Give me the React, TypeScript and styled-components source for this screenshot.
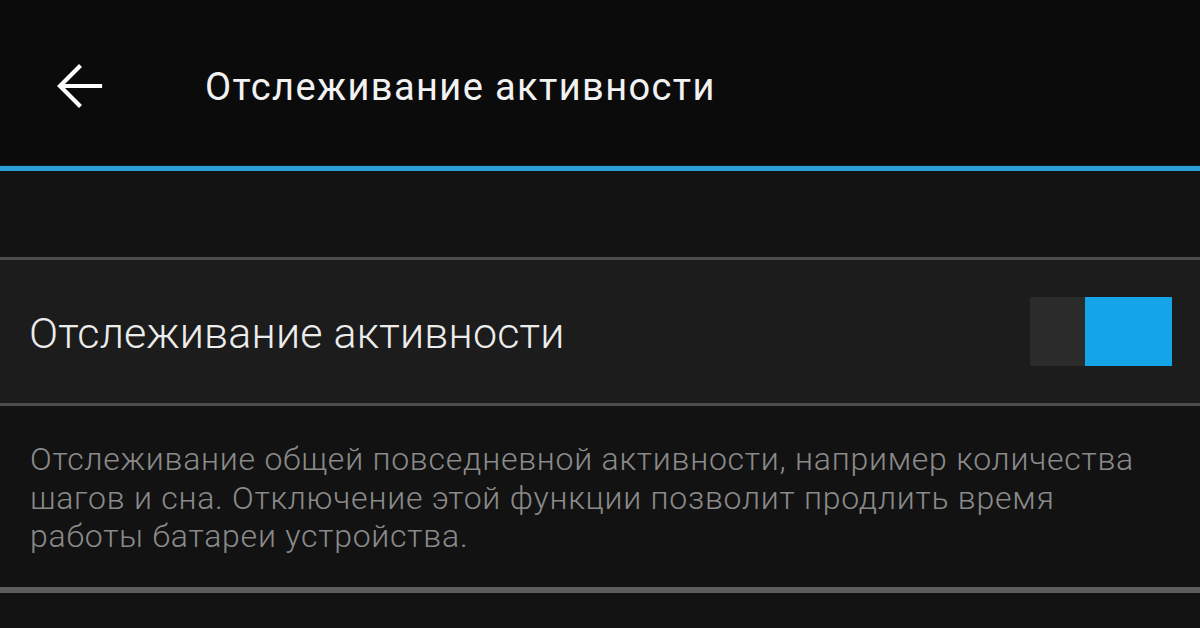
import { FC, useState } from "react"
import styled, { createGlobalStyle } from "styled-components"

const GlobalStyle = createGlobalStyle`
  html, body {
    margin: 0;
    padding: 0;
    background: #131313;
  }
  body {
    font-family: Roboto, "Noto Sans", sans-serif;
    -webkit-font-smoothing: antialiased;
  }
`

const Screen = styled.div`
  width: 1200px;
  height: 628px;
  overflow: hidden;
  background: #131313;
  display: flex;
  flex-direction: column;
`

const Toolbar = styled.header`
  height: 166px;
  flex-shrink: 0;
  background: #0b0b0b;
  display: flex;
  align-items: center;
  padding-top: 8px;
  box-sizing: border-box;
`

const BackButton = styled.button`
  width: 205px;
  height: 60px;
  padding: 0 0 0 55px;
  margin-top: -2px;
  border: none;
  background: transparent;
  display: flex;
  align-items: center;
  cursor: pointer;
`

const Title = styled.h1`
  margin: 0;
  color: #f2f2f2;
  font-family: Roboto, sans-serif;
  font-weight: 400;
  font-size: 38px;
  letter-spacing: 1.4px;
`

const AccentLine = styled.div`
  height: 5px;
  flex-shrink: 0;
  background: #2a9fd8;
  box-shadow: 0 0 2px rgba(42, 159, 216, 0.5);
`

const Spacer = styled.div`
  height: 86px;
  flex-shrink: 0;
  background: #131313;
`

const Divider = styled.div<{ $thick?: boolean }>`
  height: ${(p) => (p.$thick ? "6px" : "3px")};
  flex-shrink: 0;
  background: ${(p) => (p.$thick ? "#5c5c5c" : "#4c4c4c")};
`

const SettingRow = styled.div`
  height: 143px;
  flex-shrink: 0;
  background: #1c1c1c;
  display: flex;
  align-items: center;
  justify-content: space-between;
  padding: 0 28px 0 29px;
  box-sizing: border-box;
`

const RowLabel = styled.span`
  color: #ececec;
  font-family: Roboto, sans-serif;
  font-weight: 300;
  font-size: 43px;
  letter-spacing: 0.2px;
  margin-top: 2px;
`

const Toggle = styled.button<{ $on: boolean }>`
  width: 142px;
  height: 69px;
  padding: 0;
  border: none;
  border-radius: 2px;
  background: #2b2b2b;
  display: flex;
  justify-content: ${(p) => (p.$on ? "flex-end" : "flex-start")};
  cursor: pointer;
`

const Knob = styled.span<{ $on: boolean }>`
  width: 87px;
  height: 100%;
  background: ${(p) => (p.$on ? "#14a5e8" : "#6a6a6a")};
`

const Description = styled.p`
  height: 181px;
  flex-shrink: 0;
  margin: 0;
  padding: 34px 40px 0 30px;
  box-sizing: border-box;
  background: #121212;
  color: #8a8a8a;
  font-family: Roboto, sans-serif;
  font-weight: 300;
  font-size: 32px;
  letter-spacing: 0.75px;
  line-height: 38.5px;
`

const Rest = styled.div`
  flex: 1;
  background: #131313;
`

const BackArrow: FC = () => (
  <svg width="48" height="48" viewBox="0 0 48 48" fill="none">
    <path d="M45 24H6M24 5L5 24l19 19" stroke="#fff" strokeWidth="4.2" strokeLinecap="square" />
  </svg>
)

const App: FC = () => {
  const [tracking, setTracking] = useState(true)

  return (
    <>
      <GlobalStyle />
      <Screen>
        <Toolbar>
          <BackButton aria-label="Назад">
            <BackArrow />
          </BackButton>
          <Title>Отслеживание активности</Title>
        </Toolbar>
        <AccentLine />
        <Spacer />
        <Divider />
        <SettingRow>
          <RowLabel>Отслеживание активности</RowLabel>
          <Toggle $on={tracking} onClick={() => setTracking(!tracking)}>
            <Knob $on={tracking} />
          </Toggle>
        </SettingRow>
        <Divider />
        <Description>
          Отслеживание общей повседневной активности, например количества шагов и сна. Отключение этой функции
          позволит продлить время работы батареи устройства.
        </Description>
        <Divider $thick />
        <Rest />
      </Screen>
    </>
  )
}

export default App
